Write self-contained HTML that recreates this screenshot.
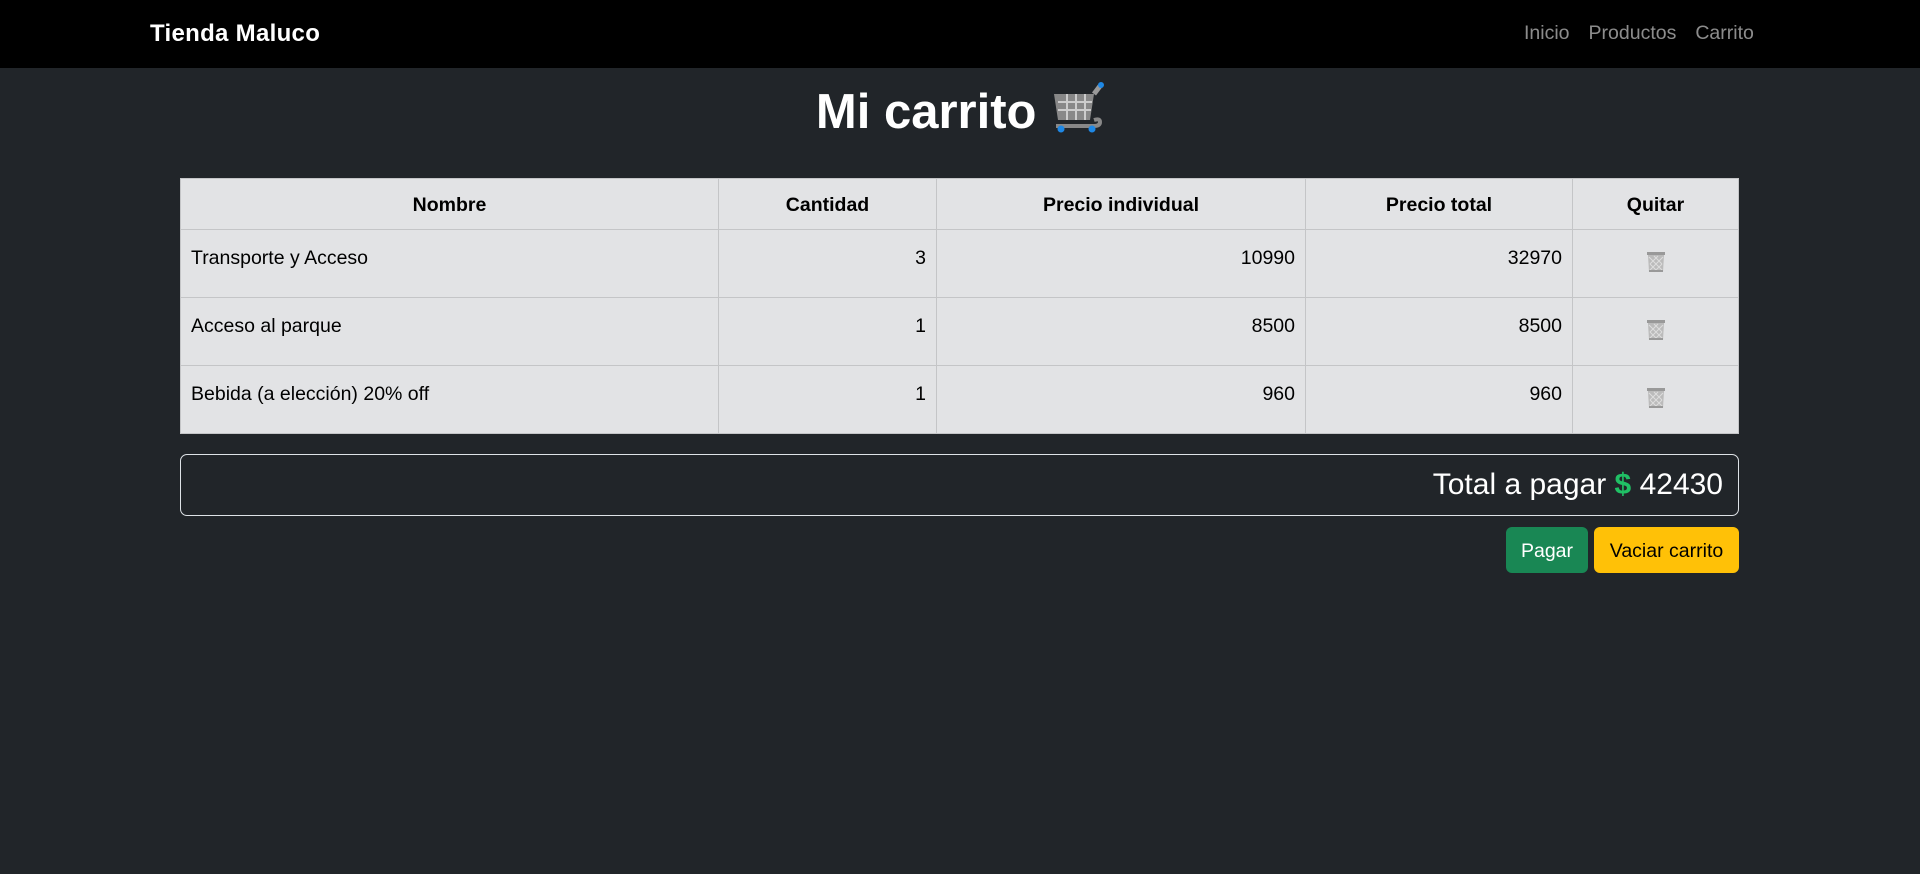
<!DOCTYPE html>
<html><head><meta charset="utf-8"><style>
*{box-sizing:border-box;margin:0;padding:0}
body{width:1920px;height:874px;background:#212529;font-family:"Liberation Sans",sans-serif;color:#fff;position:relative;overflow:hidden}
nav{position:absolute;left:0;top:0;width:1920px;height:68px;background:#000}
.brand{position:absolute;left:150px;top:20px;font-size:24px;font-weight:bold;color:#fff;letter-spacing:0.3px}
.links{position:absolute;left:1524px;top:22px;font-size:19.5px;color:rgba(255,255,255,.55);word-spacing:0}
.links span{margin-right:19px}
h1{position:absolute;left:0;width:1920px;top:82px;text-align:center;font-size:49px;font-weight:bold}
table{position:absolute;left:180px;top:178px;width:1559px;border-collapse:collapse;background:#e2e3e5;color:#000;font-size:19.5px}
td,th{border:1px solid #c4c5c7;padding:10px 10px}
th{height:51px;font-weight:bold;text-align:center;padding-top:13px}
td{height:68px;vertical-align:top;padding-top:17px}
.r{text-align:right}
.c{text-align:center}
.total{position:absolute;left:180px;top:454px;width:1559px;height:62px;border:1px solid #dee2e6;border-radius:7px;text-align:right;padding:13px 15px;font-size:30px}
.btn{position:absolute;top:527px;height:46px;border-radius:6px;font-size:19.5px;padding-top:13px;text-align:center}
</style></head><body>
<nav><div class="brand">Tienda Maluco</div><div class="links"><span>Inicio</span><span>Productos</span><span>Carrito</span></div></nav>
<h1>Mi carrito <svg width="54" height="52" viewBox="0 0 54 52" style="vertical-align:-6px"><path d="M4 12 H44 L40 38 H8 Z" fill="#888"/><g stroke="#ccc" stroke-width="2"><path d="M8 20H42M8 28H41M17 12V38M26 12V38M35 12V38"/></g><path d="M44 12 L50 4" stroke="#999" stroke-width="5"/><path d="M6 44 H44 Q50 44 50 40 Q50 36 44 38" stroke="#888" stroke-width="4" fill="none"/><circle cx="51" cy="3" r="3" fill="#1e88e5"/><circle cx="11" cy="47" r="3.5" fill="#1e88e5"/><circle cx="42" cy="47" r="3.5" fill="#1e88e5"/></svg></h1>
<table>
<tr><th style="width:538px">Nombre</th><th style="width:218px">Cantidad</th><th style="width:369px">Precio individual</th><th style="width:267px">Precio total</th><th>Quitar</th></tr>
<tr><td>Transporte y Acceso</td><td class="r">3</td><td class="r">10990</td><td class="r">32970</td><td class="c"><svg width="20" height="22" viewBox="0 0 20 22" style="margin-top:4px"><rect x="1" y="1" width="18" height="3" fill="#999"/><path d="M2 4H18L17 21H3Z" fill="#bbb"/><path d="M3 6L17 20M17 6L3 20M8 5L16 13M12 5L4 13M4 13L12 21M16 13L8 21" stroke="#ddd" stroke-width="1"/><rect x="3" y="19" width="14" height="2" fill="#999"/></svg></td></tr>
<tr><td>Acceso al parque</td><td class="r">1</td><td class="r">8500</td><td class="r">8500</td><td class="c"><svg width="20" height="22" viewBox="0 0 20 22" style="margin-top:4px"><rect x="1" y="1" width="18" height="3" fill="#999"/><path d="M2 4H18L17 21H3Z" fill="#bbb"/><path d="M3 6L17 20M17 6L3 20M8 5L16 13M12 5L4 13M4 13L12 21M16 13L8 21" stroke="#ddd" stroke-width="1"/><rect x="3" y="19" width="14" height="2" fill="#999"/></svg></td></tr>
<tr><td>Bebida (a elección) 20% off</td><td class="r">1</td><td class="r">960</td><td class="r">960</td><td class="c"><svg width="20" height="22" viewBox="0 0 20 22" style="margin-top:4px"><rect x="1" y="1" width="18" height="3" fill="#999"/><path d="M2 4H18L17 21H3Z" fill="#bbb"/><path d="M3 6L17 20M17 6L3 20M8 5L16 13M12 5L4 13M4 13L12 21M16 13L8 21" stroke="#ddd" stroke-width="1"/><rect x="3" y="19" width="14" height="2" fill="#999"/></svg></td></tr>
</table>
<div class="total">Total a pagar <b style="color:#20c065">$</b> 42430</div>
<div class="btn" style="left:1506px;width:82px;background:#198754;color:#fff">Pagar</div>
<div class="btn" style="left:1594px;width:145px;background:#ffc107;color:#000">Vaciar carrito</div>
</body></html>
